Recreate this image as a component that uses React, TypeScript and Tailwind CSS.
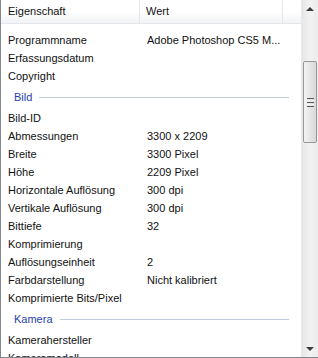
import React from 'react';

type Row = { label: string; value?: string };
type Section = { group?: string; rows: Row[] };

const sections: Section[] = [
  {
    rows: [
      { label: 'Programmname', value: 'Adobe Photoshop CS5 M...' },
      { label: 'Erfassungsdatum' },
      { label: 'Copyright' },
    ],
  },
  {
    group: 'Bild',
    rows: [
      { label: 'Bild-ID' },
      { label: 'Abmessungen', value: '3300 x 2209' },
      { label: 'Breite', value: '3300 Pixel' },
      { label: 'Höhe', value: '2209 Pixel' },
      { label: 'Horizontale Auflösung', value: '300 dpi' },
      { label: 'Vertikale Auflösung', value: '300 dpi' },
      { label: 'Bittiefe', value: '32' },
      { label: 'Komprimierung' },
      { label: 'Auflösungseinheit', value: '2' },
      { label: 'Farbdarstellung', value: 'Nicht kalibriert' },
      { label: 'Komprimierte Bits/Pixel' },
    ],
  },
  {
    group: 'Kamera',
    rows: [{ label: 'Kamerahersteller' }, { label: 'Kameramodell' }],
  },
];

function GroupHeader({ title }: { title: string }) {
  return (
    <div className="h-[24px] flex items-center pl-[13px] pr-[12px] pt-px">
      <span className="text-[#1f41b0]">{title}</span>
      <div className="flex-1 h-px bg-[#c3cbdb] ml-[7px]" />
    </div>
  );
}

function ScrollBar() {
  return (
    <div className="w-[17px] h-full flex flex-col bg-gradient-to-r from-[#e6e6e6] via-[#f2f2f2] to-[#ececec] border-l border-[#e9e9e9]">
      <div className="h-[17px] flex items-center justify-center">
        <div className="w-0 h-0 border-l-[4px] border-r-[4px] border-b-[4px] border-l-transparent border-r-transparent border-b-[#3c3c3c]" />
      </div>
      <div className="h-[44px]" />
      <div className="h-[82px] mx-px rounded-[2px] border border-[#979797] bg-gradient-to-r from-[#f3f3f3] to-[#d8d8d8] flex flex-col items-center justify-center gap-[1px]">
        <div className="w-[7px] h-px bg-[#595959]" />
        <div className="w-[7px] h-px bg-[#f4f4f4]" />
        <div className="w-[7px] h-px bg-[#595959]" />
        <div className="w-[7px] h-px bg-[#f4f4f4]" />
        <div className="w-[7px] h-px bg-[#595959]" />
      </div>
      <div className="flex-1" />
      <div className="h-[17px] flex items-center justify-center">
        <div className="w-0 h-0 border-l-[4px] border-r-[4px] border-t-[4px] border-l-transparent border-r-transparent border-t-[#3c3c3c]" />
      </div>
    </div>
  );
}

export default function App() {
  return (
    <div
      className="w-[318px] h-[358px] bg-white border-l border-b border-[#828790] flex overflow-hidden text-[11px] text-[#111]"
      style={{ fontFamily: '"Liberation Sans", Arial, sans-serif' }}
    >
      <div className="flex-1 flex flex-col min-w-0">
        {/* column headers */}
        <div className="h-[24px] flex border-b border-[#e3e6ea] bg-gradient-to-b from-white via-white to-[#f2f3f5] shrink-0">
          <div className="w-[139px] pl-[7px] flex items-center border-r border-[#e3e6ea]">Eigenschaft</div>
          <div className="w-[143px] pl-[6px] flex items-center border-r border-[#e3e6ea]">Wert</div>
          <div className="flex-1" />
        </div>
        <div className="pt-[7px]">
          {sections.map((section, i) => (
            <div key={i}>
              {section.group && <GroupHeader title={section.group} />}
              {section.rows.map((row) => (
                <div key={row.label} className="h-[18px] flex items-center">
                  <div className="w-[140px] pl-[7px] whitespace-nowrap">{row.label}</div>
                  <div className="pl-[6px] whitespace-nowrap">{row.value}</div>
                </div>
              ))}
            </div>
          ))}
        </div>
      </div>
      <ScrollBar />
    </div>
  );
}
